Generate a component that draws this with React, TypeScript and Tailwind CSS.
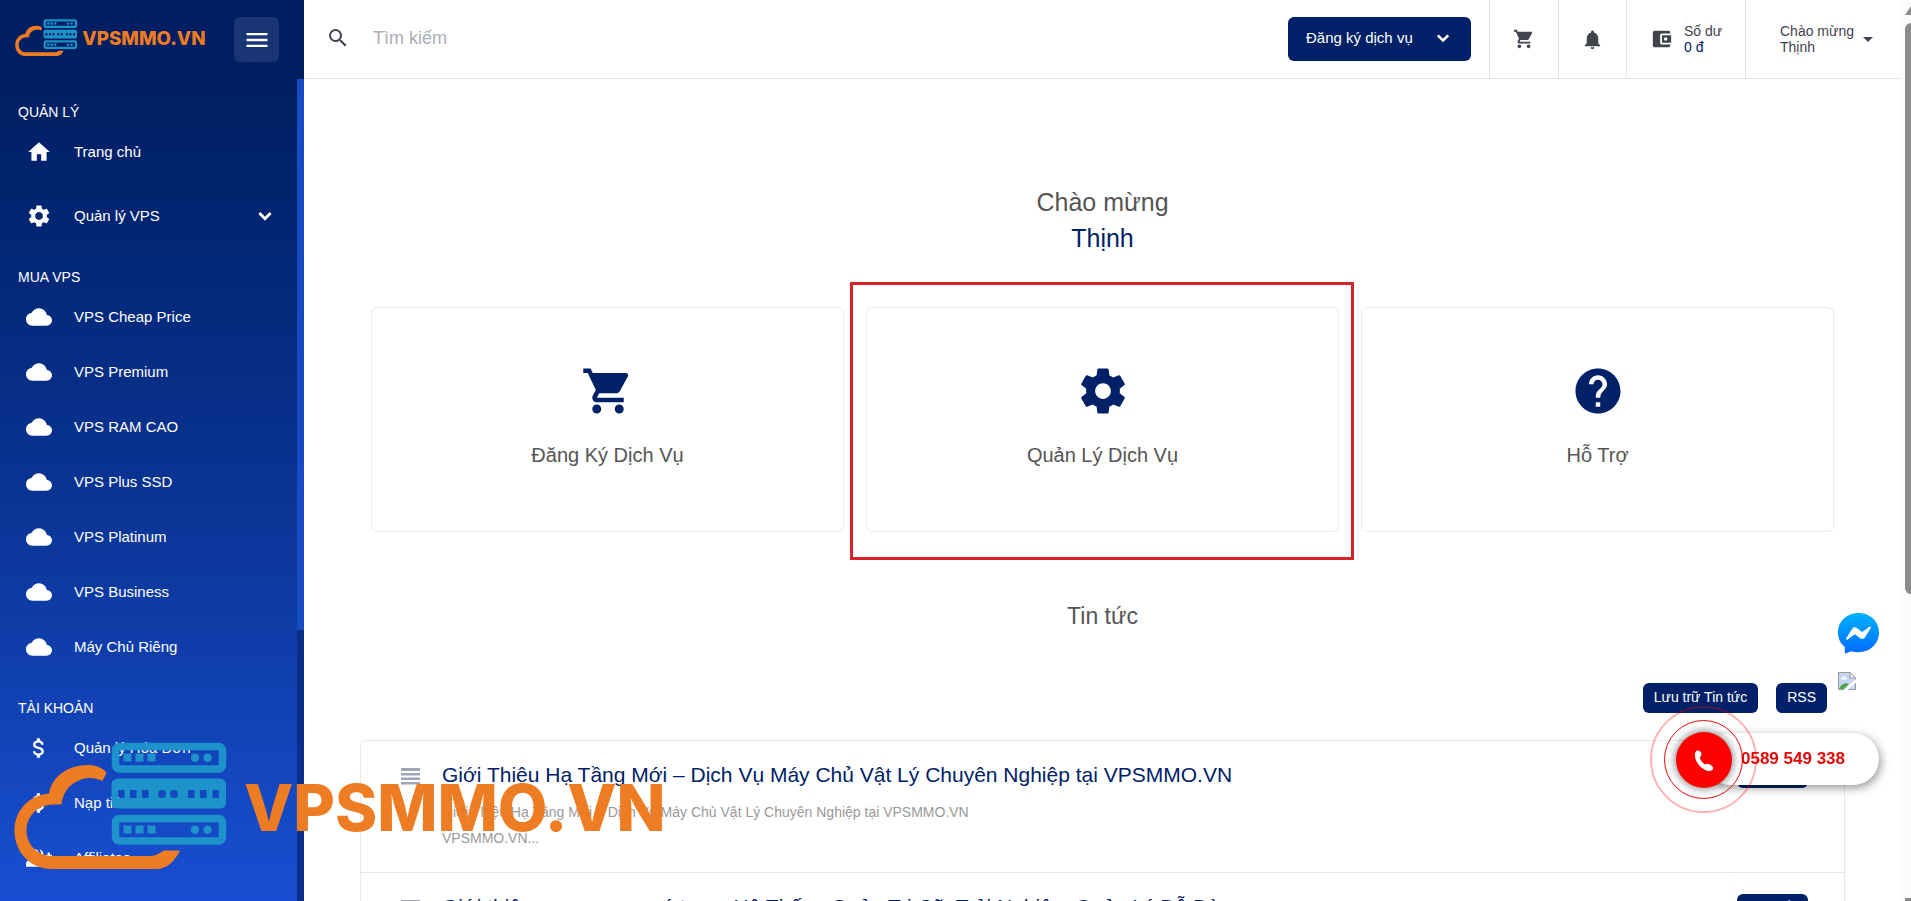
import type { IconType } from "react-icons";
import {
  MdArrowDropDown,
  MdAttachMoney,
  MdCloud,
  MdGroupAdd,
  MdHelp,
  MdHome,
  MdMenu,
  MdNotifications,
  MdSearch,
  MdSettings,
} from "react-icons/md";

type NavItem = { label: string; icon: IconType; expandable?: boolean };

const NAV: { title: string; items: NavItem[] }[] = [
  {
    title: "QUẢN LÝ",
    items: [
      { label: "Trang chủ", icon: MdHome },
      { label: "Quản lý VPS", icon: MdSettings, expandable: true },
    ],
  },
  {
    title: "MUA VPS",
    items: [
      { label: "VPS Cheap Price", icon: MdCloud },
      { label: "VPS Premium", icon: MdCloud },
      { label: "VPS RAM CAO", icon: MdCloud },
      { label: "VPS Plus SSD", icon: MdCloud },
      { label: "VPS Platinum", icon: MdCloud },
      { label: "VPS Business", icon: MdCloud },
      { label: "Máy Chủ Riêng", icon: MdCloud },
    ],
  },
  {
    title: "TÀI KHOẢN",
    items: [
      { label: "Quản lý Hóa Đơn", icon: MdAttachMoney },
      { label: "Nạp tiền", icon: MdAttachMoney },
      { label: "Affiliates", icon: MdGroupAdd },
    ],
  },
];

const NEWS = [
  {
    title: "Giới Thiêu Hạ Tầng Mới – Dịch Vụ Máy Chủ Vật Lý Chuyên Nghiệp tại VPSMMO.VN",
    excerpt: "Giới Thiệu Hạ Tầng Mới – Dịch Vụ Máy Chủ Vật Lý Chuyên Nghiệp tại VPSMMO.VN",
    more: "VPSMMO.VN...",
  },
  {
    title: "Giới thiệu vpsmmo.vn có trong Hệ Thống Quản Trị Cũ, Trải Nghiệm Quản Lý Dễ Dàng",
    excerpt: "Giới thiệu Hệ Thống Quản Trị",
    more: "VPSMMO.VN...",
  },
];

export default function App() {
  return (
    <div className="flex h-screen overflow-hidden bg-white font-['Liberation_Sans',Arial,sans-serif] text-[#555]">
      <Sidebar />
      <div className="flex min-w-0 flex-1 flex-col">
        <TopBar />
        <main className="flex-1 overflow-hidden px-14 pt-[105px]">
          <h1 className="text-center text-[25px] leading-9">
            Chào mừng
            <span className="block text-[#002167]">Thịnh</span>
          </h1>

          <div className="mx-[11px] mt-[51px] grid grid-cols-3 gap-[22px]">
            <ServiceCard label="Đăng Ký Dịch Vụ" icon={<CartIcon className="size-[54px]" />} />
            <ServiceCard label="Quản Lý Dịch Vụ" icon={<CogIcon className="size-[54px]" />} highlighted />
            <ServiceCard label="Hỗ Trợ" icon={<MdHelp className="size-[54px]" />} />
          </div>

          <h2 className="mt-[66px] text-center text-[23px] leading-9">Tin tức</h2>

          <div className="mt-[49px] mr-[18px] flex justify-end gap-[18px] text-sm text-white">
            <a href="#" className="rounded-md bg-[#002167] px-[11px] pb-0.5 leading-7">
              Lưu trữ Tin tức
            </a>
            <a href="#" className="rounded-md bg-[#002167] px-[11px] pb-0.5 leading-7">
              RSS
            </a>
          </div>

          <ul className="mt-[27px] rounded-md border border-[#e8e8ea]">
            {NEWS.map((n) => (
              <li key={n.title} className="flex h-[132px] border-b border-[#e8e8ea] pt-5 pr-9 pl-10">
                <LinesIcon className="mt-[7px] h-[22px] w-[19px] shrink-0 text-[#a0a5b5]" />
                <div className="ml-[22px] min-w-0 flex-1">
                  <a href="#" className="block text-[21px] leading-7 text-[#002167]">
                    {n.title}
                  </a>
                  <p className="mt-2.5 text-sm leading-[26px] text-[#999]">
                    {n.excerpt}
                    <br />
                    {n.more}
                  </p>
                </div>
                <a
                  href="#"
                  className="mt-px h-[26px] w-[71px] rounded-md bg-[#002167] text-center text-sm leading-[26px] text-white"
                >
                  Chi tiết
                </a>
              </li>
            ))}
          </ul>
        </main>
      </div>
      <PageScrollbar />

      <div className="pointer-events-none fixed bottom-[31px] left-3.5">
        <Logo className="w-[656px]" />
      </div>
      <ContactDock />
    </div>
  );
}

function Sidebar() {
  return (
    <aside className="flex w-[304px] shrink-0 flex-col bg-linear-to-b from-[#001f63] from-10% via-[#0a3494] via-55% to-[#184fd2] text-white">
      <div className="flex h-[79px] shrink-0 items-center justify-between pr-[25px] pl-[15px]">
        <a href="#" aria-label="VPSMMO.VN" className="pb-1">
          <Logo className="w-48" />
        </a>
        <button aria-label="Menu" className="grid size-[45px] place-items-center rounded-md bg-white/10">
          <MdMenu className="size-7" />
        </button>
      </div>
      <div className="flex min-h-0 flex-1">
        <nav className="flex-1 overflow-hidden">
          {NAV.map((group) => (
            <section key={group.title}>
              <h2 className="px-[18px] pt-[23px] pb-[3px] text-sm leading-5">{group.title}</h2>
              {group.items.map(({ label, icon: Icon, expandable }) => (
                <a
                  key={label}
                  href="#"
                  className={`flex h-[55px] items-center pr-[19px] pb-px pl-[26px] text-[15px] ${expandable ? "mt-[9px]" : ""}`}
                >
                  <Icon className="size-[26px] shrink-0" />
                  <span className="ml-[22px] flex-1">{label}</span>
                  {expandable && <ChevronIcon className="size-[26px]" />}
                </a>
              ))}
            </section>
          ))}
        </nav>
        <div className="w-[7px] bg-[#092f8b]">
          <div className="h-[67%] bg-[#174bc4]" />
        </div>
      </div>
    </aside>
  );
}

function TopBar() {
  return (
    <header className="flex h-[79px] shrink-0 border-b border-[#e4e4e6] text-[#40444d]">
      <label className="flex flex-1 items-center pb-0.5 pl-[22px]">
        <MdSearch className="size-6" />
        <input
          aria-label="Tìm kiếm"
          placeholder="Tìm kiếm"
          className="ml-[23px] flex-1 text-lg outline-none placeholder:text-[#acacb4]"
        />
      </label>
      <button className="mt-[17px] mr-[18px] flex h-11 w-[183px] items-center justify-between rounded-md bg-[#002167] pr-4 pb-0.5 pl-[18px] text-[15px] text-white">
        Đăng ký dịch vụ
        <ChevronIcon className="size-6" />
      </button>
      <button aria-label="Giỏ hàng" className="grid w-[69px] place-items-center border-l border-[#e4e4e6]">
        <CartIcon className="size-[22px]" />
      </button>
      <button aria-label="Thông báo" className="grid w-[68px] place-items-center border-l border-[#e4e4e6]">
        <MdNotifications className="size-[23px]" />
      </button>
      <div className="flex w-[119px] items-center border-l border-[#e4e4e6] pl-6 text-sm leading-4">
        <WalletIcon className="size-[22px]" />
        <div className="ml-[11px]">
          Số dư
          <div className="text-[#002167]">0 đ</div>
        </div>
      </div>
      <button className="flex w-[156px] items-center border-l border-[#e4e4e6] pl-[34px] text-left text-sm leading-4">
        <span>
          Chào mừng
          <br />
          Thịnh
        </span>
        <MdArrowDropDown className="ml-0.5 size-6" />
      </button>
    </header>
  );
}

function ServiceCard({
  label,
  icon,
  highlighted = false,
}: {
  label: string;
  icon: React.ReactNode;
  highlighted?: boolean;
}) {
  return (
    <a
      href="#"
      className="relative flex h-[225px] flex-col items-center rounded-md border border-[#ebebed] pt-14 text-xl leading-7"
    >
      <span className="text-[#002167]">{icon}</span>
      <span className="mt-[23px]">{label}</span>
      {highlighted && (
        <span className="absolute -top-[26px] -right-4 -bottom-[29px] -left-[17px] border-3 border-[#d7242a]" />
      )}
    </a>
  );
}

function PageScrollbar() {
  return (
    <div className="flex w-2.5 shrink-0 flex-col overflow-hidden bg-[#fcfcfc] pl-1">
      <div className="mt-1.5 h-[9px] w-3 shrink-0 bg-[#8b8b8b] [clip-path:polygon(50%_0,100%_100%,0_100%)]" />
      <div className="mt-2 mb-auto h-[571px] rounded-l-md bg-[#8b8b8b]" />
      <div className="h-[3px] w-3 shrink-0 bg-[#8b8b8b]" />
    </div>
  );
}

function ContactDock() {
  return (
    <div className="fixed right-8 bottom-[116px] flex flex-col items-end">
      <a href="#" aria-label="Messenger">
        <svg viewBox="0 0 41 41" className="size-[41px]">
          <defs>
            <linearGradient id="msg" x1="0" y1="0" x2="0" y2="1">
              <stop offset="0" stopColor="#00b2ff" />
              <stop offset="1" stopColor="#006aff" />
            </linearGradient>
          </defs>
          <path
            fill="url(#msg)"
            d="M20.5 0C9 0 0 8.300 0 19.500 0 25.500 2.500 30.500 6.800 34V39.500C6.800 40.300 7.600 40.600 8.300 40.300L13 38.200C15.500 38.900 18 39.200 20.500 39.200 32 39.200 41 30.700 41 19.500S32 0 20.500 0Z"
          />
          <path
            fill="#fff"
            d="M8.200 25.300 14.200 15.800C15.200 14.200 17.300 13.900 18.800 15L23.500 18.500C24 18.900 24.600 18.900 25 18.500L31.400 13.700C32.300 13.100 33.300 14.100 32.800 15L26.800 24.500C25.800 26.100 23.700 26.400 22.200 25.300L17.500 21.800C17 21.400 16.400 21.400 16 21.800L9.600 26.600C8.700 27.200 7.700 26.200 8.200 25.300Z"
          />
        </svg>
      </a>
      <div className="mt-[18px] mr-[23px]">
        <BrokenImageIcon />
      </div>
      <a
        href="tel:0589549338"
        className="relative mt-[43px] flex h-[52px] w-[175px] items-center rounded-full bg-white pl-[37px] text-[17px] font-bold text-[#e60808] shadow-[2px_3px_10px_rgba(0,0,0,0.4)]"
      >
        0589 549 338
        <span className="absolute -top-[27px] -left-[54px] size-[107px] rounded-full border-2 border-[#ff0000]/30" />
        <span className="absolute -top-[13px] -left-10 size-[79px] rounded-full border border-[#e60808]" />
        <span className="absolute -top-px -left-7 grid size-14 place-items-center rounded-full bg-[#ff0000] shadow-[0_0_10px_rgba(0,0,0,0.6)]">
          <svg viewBox="0 0 24 26" className="h-[25px] w-[21px]" fill="#fff">
            <path d="M3 1.800C5 .800 7.500 2 8.200 4.500 8.800 6.800 8.200 8.300 6.500 9.200 7.200 12.300 9.800 16 12.800 17.600 14.200 16.400 16 16.500 18.200 17.600 20.900 19 22.400 20.600 21.800 22.300 21 24.600 18.200 25.300 15 24.600 8 23 1 14.500 1 6.800 1 4.500 1.600 2.600 3 1.800Z" />
          </svg>
        </span>
      </a>
    </div>
  );
}

function Logo({ className }: { className?: string }) {
  return (
    <svg viewBox="0 0 656 128" className={className}>
      <path
        fill="#ee7c22"
        d="M74 23C82 22.500 90 26.500 92.500 31L88.500 39C81 35.500 73 35 66 38 55 42 48.500 51 47.500 62.500H40C24 62.500 12.500 74 12.500 88.500S24 114 39 114H136C142 114 146 111 149.500 108.500H166C161 119 153 127 142 127H38C16 127 .5 110 .5 88.500.5 68.500 15 53 35 51.500 38 34.500 54 23 74 23Z"
      />
      <ServerUnit y={0} />
      <path
        fill="#1e92cb"
        fillRule="evenodd"
        d="M104 36.500H205.500Q212 36.500 212 43V60Q212 66.500 205.500 66.500H104Q97.500 66.500 97.500 60V43Q97.500 36.500 104 36.500ZM104 48V56H110.500V48ZM116 48V56H122.500V48ZM128 48V56H134.500V48ZM174 48V56H180.500V48ZM186 48V56H192.500V48ZM198.500 48V56H205V48ZM144 52A4 4 0 1 0 152 52 4 4 0 1 0 144 52ZM156 52A4 4 0 1 0 164 52 4 4 0 1 0 156 52Z"
      />
      <ServerUnit y={72} />
      <text x="230" y="89" fill="#ee7c22" className="font-[Inter,sans-serif] text-[64px] font-extrabold">
        VPSMMO.VN
      </text>
    </svg>
  );
}

function ServerUnit({ y }: { y: number }) {
  return (
    <g transform={`translate(0 ${y})`} fill="#1e92cb">
      <rect x="101.500" y="4.500" width="107" height="22.500" rx="4" fill="none" stroke="#1e92cb" strokeWidth="7.500" />
      <rect x="109.500" y="11.500" width="8" height="8" />
      <rect x="121.500" y="11.500" width="8" height="8" />
      <rect x="133.500" y="11.500" width="8" height="8" />
      <circle cx="181" cy="15.800" r="4.200" />
      <circle cx="193.500" cy="15.800" r="4.200" />
    </g>
  );
}

function ChevronIcon({ className }: { className?: string }) {
  return (
    <svg viewBox="0 0 24 24" fill="none" stroke="currentColor" strokeWidth="2.600" className={className}>
      <path d="M6.800 9.300 12 14.500 17.200 9.300" />
    </svg>
  );
}

function LinesIcon({ className }: { className?: string }) {
  return (
    <svg viewBox="0 0 19 22" fill="currentColor" className={className}>
      <path d="M0 0H19V3H0ZM0 5H19V7.500H0ZM0 9.500H19V12H0ZM0 14H19V16.500H0Z" />
    </svg>
  );
}

function CartIcon({ className }: { className?: string }) {
  return (
    <svg viewBox="0 0 24 24" fill="currentColor" className={className}>
      <path d="M7 18c-1.100 0-1.990.9-1.990 2S5.900 22 7 22s2-.9 2-2-.9-2-2-2zM1 2v2h2l3.600 7.590-1.350 2.450c-.16.280-.25.610-.25.960 0 1.100.9 2 2 2h12v-2H7.420c-.14 0-.25-.11-.25-.25l.03-.12.9-1.630h7.450c.75 0 1.410-.41 1.750-1.030l3.580-6.490c.08-.14.12-.31.12-.48 0-.55-.45-1-1-1H5.210l-.94-2H1zm16 16c-1.100 0-1.990.9-1.990 2s.89 2 1.990 2 2-.9 2-2-.9-2-2-2z" />
    </svg>
  );
}

function CogIcon({ className }: { className?: string }) {
  return (
    <svg viewBox="0 0 24 24" fill="currentColor" className={className}>
      <path d="M19.430 12.980c.04-.32.07-.64.07-.98s-.03-.66-.07-.98l2.110-1.650c.19-.15.240-.42.120-.64l-2-3.460c-.12-.22-.39-.3-.61-.22l-2.490 1c-.52-.4-1.080-.73-1.690-.98l-.38-2.650C14.460 2.180 14.250 2 14 2h-4c-.25 0-.46.180-.49.420l-.38 2.650c-.61.250-1.170.590-1.690.980l-2.490-1c-.23-.09-.49 0-.61.220l-2 3.460c-.13.220-.07.490.120.640l2.110 1.650c-.04.320-.07.650-.07.980s.03.660.070.980l-2.110 1.650c-.19.150-.24.420-.12.640l2 3.460c.12.220.390.300.610.220l2.490-1c.52.400 1.080.730 1.690.980l.38 2.650c.03.240.240.420.490.420h4c.25 0 .46-.18.490-.42l.38-2.650c.61-.25 1.170-.59 1.690-.98l2.490 1c.23.090.490 0 .61-.22l2-3.460c.12-.22.070-.49-.12-.64l-2.110-1.650zM12 15.500c-1.930 0-3.500-1.570-3.500-3.500s1.570-3.500 3.500-3.500 3.500 1.570 3.500 3.500-1.570 3.500-3.500 3.500z" />
    </svg>
  );
}

function WalletIcon({ className }: { className?: string }) {
  return (
    <svg viewBox="0 0 24 24" fill="currentColor" className={className}>
      <path d="M21 18v1c0 1.100-.9 2-2 2H4a2 2 0 0 1-2-2V5a2 2 0 0 1 2-2h15c1.100 0 2 .9 2 2v1h-9a2 2 0 0 0-2 2v8a2 2 0 0 0 2 2h9zm-9-2h10V8H12v8zm4-2.200c-.9 0-1.800-.8-1.800-1.800s.9-1.800 1.800-1.800 1.800.8 1.800 1.800-.9 1.800-1.800 1.800z" />
    </svg>
  );
}

// Same glyph the browser shows for an image that failed to load
function BrokenImageIcon() {
  return (
    <svg viewBox="0 0 18 18" className="size-[18px]">
      <path d="M.5.500H12L17.500 6V17.500H.5Z" fill="#c5d6f3" stroke="#9a9a9a" />
      <path d="M12 .500V6H17.500Z" fill="#fff" stroke="#9a9a9a" />
      <path d="M3 7.500A1.500 1.500 0 0 1 4.500 5.500 2 2 0 0 1 8 5.500 1.200 1.200 0 0 1 8.500 7.500Z" fill="#fff" />
      <path d="M1 17C3 12 7 10 11 12L6 17Z" fill="#4ba84a" />
      <path d="M18 7V10.500L9.500 18H5.500Z" fill="#fff" />
    </svg>
  );
}
